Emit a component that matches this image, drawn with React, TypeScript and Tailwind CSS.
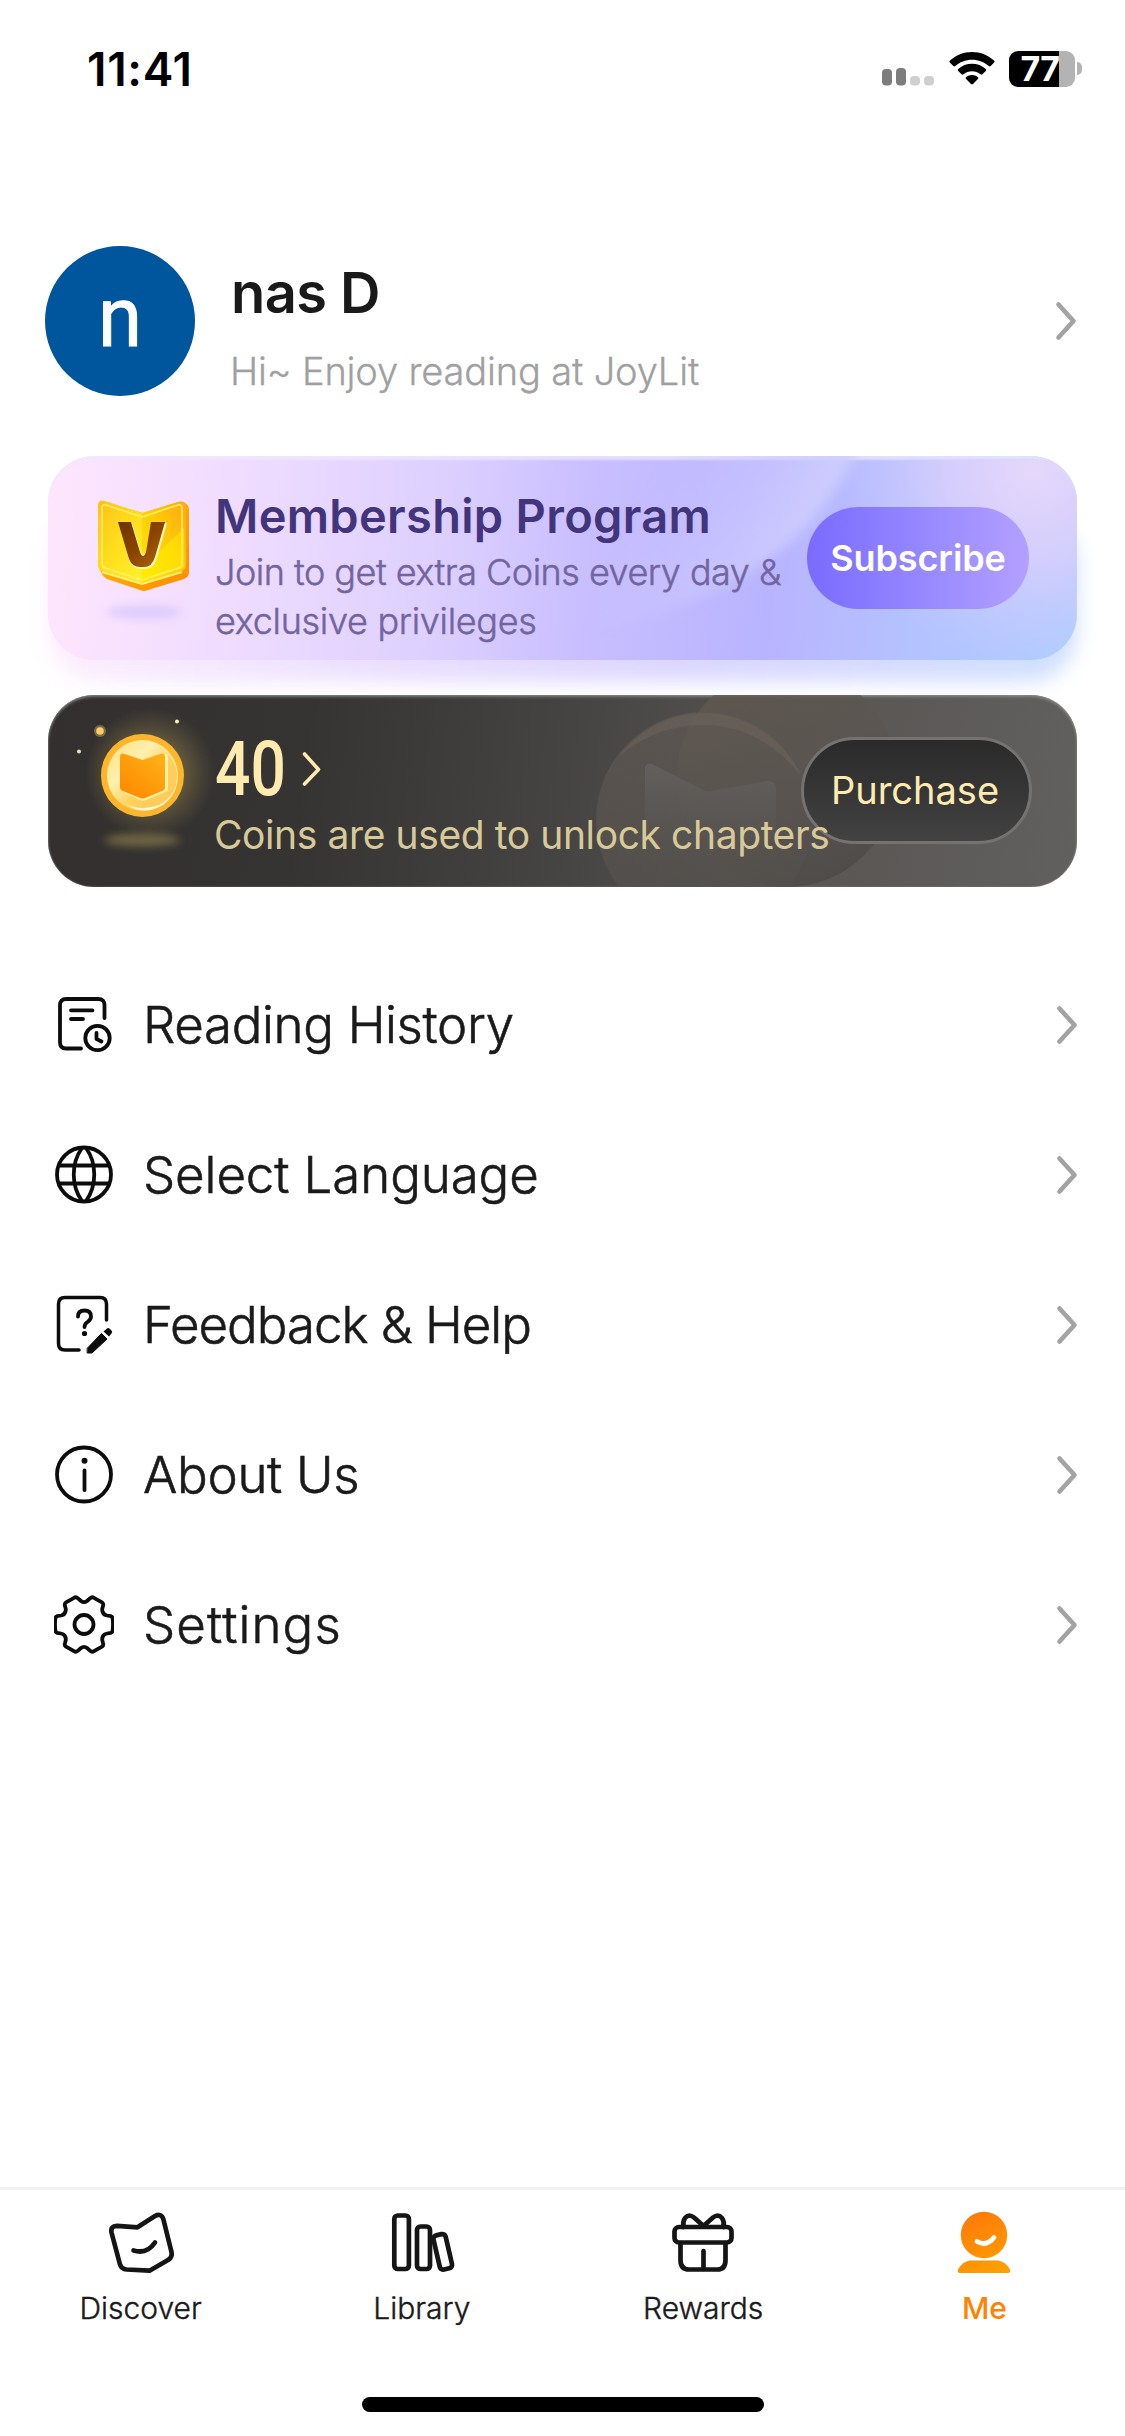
import type { ReactNode } from "react";

function Chevron() {
  return (
    <svg width="24" height="40" viewBox="0 0 24 40" fill="none" stroke="#a3a3a3" strokeWidth="4.600" strokeLinecap="round" strokeLinejoin="round">
      <path d="M4.500 3.500L19.500 20L4.500 36.500" />
    </svg>
  );
}

function StatusBar() {
  return (
    <div className="flex h-[137px] items-start justify-between pr-[43px] pl-[87px]">
      <span className="mt-[41px] font-['Inter'] text-[46px] leading-[56px] font-semibold tracking-[0.7px] text-black">
        11:41
      </span>
      <div className="mt-[51px] flex h-9 items-start">
        <svg width="53" height="36" viewBox="0 0 53 36" className="mr-[14px]">
          <rect x="0" y="18" width="10" height="16.500" rx="4" fill="#7d7d7d" />
          <rect x="14" y="17" width="10" height="17.500" rx="4" fill="#7d7d7d" />
          <rect x="28" y="25" width="10" height="9.500" rx="4" fill="#cfcfcf" />
          <rect x="42" y="25" width="10" height="9.500" rx="4" fill="#cfcfcf" />
        </svg>
        <svg width="46" height="36" viewBox="0 0 46 36" className="mr-[14px]">
          <path d="M23 1C14.500 1 6.800 4.200 1 9.600C.3 10.200.3 11 .9 11.600L4.300 15C4.800 15.600 5.600 15.600 6.200 15.100C10.700 11 16.500 8.700 23 8.700C29.500 8.700 35.300 11 39.800 15.100C40.400 15.600 41.200 15.600 41.700 15L45.100 11.600C45.700 11 45.700 10.200 45 9.600C39.200 4.200 31.500 1 23 1Z" />
          <path d="M23 12.700C17.800 12.700 13 14.600 9.300 17.900C8.600 18.500 8.600 19.300 9.200 19.900L12.600 23.300C13.200 23.900 13.900 23.800 14.500 23.300C16.900 21.400 19.800 20.300 23 20.300C26.200 20.300 29.100 21.400 31.500 23.300C32.100 23.800 32.800 23.900 33.400 23.300L36.800 19.900C37.400 19.300 37.400 18.500 36.700 17.900C33 14.600 28.200 12.700 23 12.700Z" />
          <path d="M23 24.100C20.700 24.100 18.700 24.900 17.200 26.100C16.500 26.700 16.500 27.400 17.100 28L22 33C22.600 33.600 23.400 33.600 24 33L28.900 28C29.500 27.400 29.500 26.700 28.800 26.100C27.300 24.900 25.300 24.100 23 24.100Z" />
        </svg>
        <div className="flex h-9 w-[66px] items-center justify-center rounded-[9px] bg-[linear-gradient(90deg,#000_50px,#b3b3b3_50px)] pr-[4px] font-['Inter'] text-[34px] leading-9 font-bold tracking-[-0.5px] text-white">
          77
        </div>
        <div className="mt-[11px] ml-[2px] h-[13px] w-[5px] rounded-r-full bg-[#b3b3b3]" />
      </div>
    </div>
  );
}

function Profile() {
  return (
    <div className="mt-[109px] flex h-[150px] items-center pr-[47px] pl-[45px]">
      <div className="flex size-[150px] items-center justify-center rounded-full bg-[#00569c] pb-[7px] font-['Roboto'] text-[83px] leading-none text-white">
        <span className="scale-x-[0.96] [-webkit-text-stroke:1px_white]">n</span>
      </div>
      <div className="ml-[36px] flex-1">
        <h1 className="mt-[11px] font-['Inter'] text-[56px] leading-[68px] font-semibold tracking-[-0.600px] text-[#1a1a1a]">nas D</h1>
        <p className="mt-[20px] -ml-px font-['Inter'] text-[38px] leading-[48px] font-light tracking-[-0.150px] whitespace-nowrap text-[#a0a0a0] [-webkit-text-stroke:0.3px_#a0a0a0]">
          Hi~ Enjoy reading at JoyLit
        </p>
      </div>
      <Chevron />
    </div>
  );
}

function MemberBadge() {
  return (
    <svg width="110" height="140" viewBox="0 0 110 140" fill="none" className="shrink-0">
      <defs>
        <linearGradient id="badge-side" x1="0" y1="0" x2="1" y2="1">
          <stop stopColor="#ffc400" />
          <stop offset="1" stopColor="#ff8b00" />
        </linearGradient>
        <linearGradient id="badge-left" x1="0" y1="0" x2="0.800" y2="1">
          <stop stopColor="#ffc01a" />
          <stop offset="0.500" stopColor="#ffdc1c" />
          <stop offset="1" stopColor="#ffee2a" />
        </linearGradient>
        <linearGradient id="badge-right" x1="1" y1="0" x2="0" y2="1">
          <stop stopColor="#ffaa10" />
          <stop offset="0.450" stopColor="#ffca0a" />
          <stop offset="1" stopColor="#ffec00" />
        </linearGradient>
        <linearGradient id="badge-v" x1="0" y1="0" x2="1" y2="1">
          <stop stopColor="#6a3500" />
          <stop offset="0.500" stopColor="#8a4300" />
          <stop offset="1" stopColor="#b06a12" />
        </linearGradient>
        <filter id="badge-blur" x="-30%" y="-100%" width="160%" height="300%">
          <feGaussianBlur stdDeviation="4" />
        </filter>
      </defs>
      <ellipse cx="54" cy="120" rx="38" ry="7" fill="#d3c5fa" opacity="0.700" filter="url(#badge-blur)" />
      <path d="M9 14Q9 8 15 10L53 21L88 10Q91 9 95 11Q99 13 99 18V80Q99 85 94 87L58 98Q54 100 50 98L17 87Q13 85 11 80L9 76Z" fill="url(#badge-side)" />
      <path d="M8 14Q8 7 15 9L52 21V91L12 79Q8 78 8 74Z" fill="url(#badge-left)" />
      <path d="M52 21L88 10Q96 8 96 15V73Q96 77 92 79L52 91Z" fill="url(#badge-right)" />
      <path d="M52 76L94 36V73Q94 76 91 77L52 89Z" fill="#fff000" opacity="0.500" />
      <path d="M12 16Q12 12 16 13L52 25L88 13Q92 12 92 16V72Q92 75 89 76L52 88L15 76Q12 75 12 72Z" stroke="#fff06a" strokeWidth="1.500" />
      <path d="M12 80L52 92L92 80" stroke="#fff27a" strokeWidth="2" />
      <path d="M30 31H42L51 60Q53 65 56 60L64 31H77L67 66Q64 77 55 77H51Q42 77 39 68Z" fill="#fff7b8" />
      <path d="M28 30H41L50 60Q53 68 56 60L61 30H75L65 65Q62 75 54 75H50Q42 75 39 67Z" fill="url(#badge-v)" />
    </svg>
  );
}

function MembershipCard() {
  return (
    <section className="relative mx-[48px] mt-[60px] h-[204px]">
      <div className="absolute inset-x-0 top-[60px] -bottom-[22px] rounded-[50px] bg-[linear-gradient(90deg,#fdeefe,#e9defe_35%,#dcd6ff_60%,#cfe0ff)] blur-[10px]" />
      <div className="relative flex h-full overflow-hidden rounded-[46px] bg-[linear-gradient(95deg,#ffe6fd_0%,#ecdaff_22%,#ddd0ff_38%,#c9bfff_52%,#b9b4ff_70%,#b4c2ff_84%,#b0ceff_100%)] shadow-[inset_0_4px_2px_rgba(240,232,255,0.75)]">
        <svg className="absolute inset-0" width="1029" height="204" viewBox="0 0 1029 204">
          <defs>
            <linearGradient id="ray" x1="610" y1="20" x2="745" y2="90" gradientUnits="userSpaceOnUse">
              <stop stopColor="#cbc6ff" stopOpacity="0" />
              <stop offset="1" stopColor="#cfcdff" stopOpacity="0.900" />
            </linearGradient>
            <radialGradient id="corner" cx="985" cy="15" r="195" gradientUnits="userSpaceOnUse">
              <stop stopColor="#e6d8fb" />
              <stop offset="0.450" stopColor="#dccffc" stopOpacity="0.800" />
              <stop offset="1" stopColor="#cfc6ff" stopOpacity="0" />
            </radialGradient>
            <filter id="soft" x="-20%" y="-20%" width="140%" height="140%">
              <feGaussianBlur stdDeviation="6" />
            </filter>
          </defs>
          <path d="M812 -10C784 50 750 80 728 97C690 128 640 150 560 170L480 -10Z" fill="url(#ray)" filter="url(#soft)" />
          <rect x="0" y="4" width="1029" height="200" fill="url(#corner)" />
        </svg>
        <div className="relative flex w-full items-start">
          <div className="mt-[36px] ml-[42px] w-[125px]">
            <MemberBadge />
          </div>
          <div className="w-[592px] shrink-0 whitespace-nowrap">
            <h2 className="mt-[32px] font-['Inter'] text-[47px] leading-[56px] font-semibold tracking-[0.300px] text-[#43357b]">
              Membership Program
            </h2>
            <p className="mt-[4px] font-['Inter'] text-[36px] leading-[49px] font-light tracking-[-0.500px] text-[#72659f] [-webkit-text-stroke:0.5px_#72659f]">
              Join to get extra Coins every day &amp;
              <br />
              <span className="tracking-[-0.300px]">exclusive privileges</span>
            </p>
          </div>
          <button className="mt-[51px] h-[102px] w-[222px] rounded-full bg-linear-to-r from-[#7a6bff] to-[#b3a0ff] font-['Inter'] text-[36px] font-semibold tracking-[-0.100px] text-white">
            Subscribe
          </button>
        </div>
      </div>
    </section>
  );
}

function CoinArt() {
  return (
    <svg width="167" height="192" viewBox="0 0 167 192" fill="none" className="shrink-0">
      <defs>
        <radialGradient id="halo">
          <stop offset="0.500" stopColor="#a08a4c" stopOpacity="0.450" />
          <stop offset="1" stopColor="#8a7a45" stopOpacity="0" />
        </radialGradient>
        <linearGradient id="face" x1="0" y1="0" x2="1" y2="1">
          <stop stopColor="#ffdf7a" />
          <stop offset="0.350" stopColor="#fff0b0" />
          <stop offset="0.600" stopColor="#ffd05a" />
          <stop offset="1" stopColor="#ffc95a" />
        </linearGradient>
        <linearGradient id="book" x1="1" y1="0" x2="0.200" y2="1">
          <stop stopColor="#ffb31a" />
          <stop offset="1" stopColor="#ff8a00" />
        </linearGradient>
        <filter id="coin-blur" x="-50%" y="-150%" width="200%" height="400%">
          <feGaussianBlur stdDeviation="4" />
        </filter>
      </defs>
      <circle cx="102" cy="78" r="65" fill="url(#halo)" />
      <ellipse cx="94" cy="145" rx="38" ry="6.500" fill="#7d7147" opacity="0.850" filter="url(#coin-blur)" />
      <circle cx="52" cy="36" r="6" fill="#ffd071" opacity="0.350" />
      <circle cx="52" cy="36" r="3.800" fill="#ffcd68" />
      <circle cx="129" cy="26.500" r="2" fill="#ffeeb8" />
      <circle cx="31" cy="56.500" r="2" fill="#e9e0b0" />
      <circle cx="94.500" cy="80.500" r="41.500" fill="#fdb62c" />
      <circle cx="94.500" cy="80.500" r="35.500" fill="url(#face)" />
      <path d="M111 50Q126 60 129 78Q130 100 111 110Q92 117 76 108Q95 122 115 110Q131 98 129.500 78Q128 60 111 50Z" fill="#fff6d2" />
      <path d="M75 63Q75 58 80 60L95 66L114 59Q120 57 120 63V93Q120 96 117 97L98 105Q95 106 92 105L77 98Z" fill="#fff0a8" />
      <path d="M72 62Q72 57 77 59L94.500 65L112 59Q117 57 117 62V92Q117 95 114 96L97 103Q94.500 104 92 103L75 96Q72 95 72 92Z" fill="url(#book)" />
    </svg>
  );
}

function CoinsCard() {
  return (
    <section className="relative mx-[48px] mt-[35px] flex h-[192px] overflow-hidden rounded-[46px] bg-[linear-gradient(97deg,#322f2e_0%,#363433_25%,#464442_50%,#585553_72%,#62605e_100%)] shadow-[inset_0_2px_3px_rgba(150,155,150,0.65),inset_0_0_2px_rgba(140,140,140,0.8)]">
      <svg className="absolute inset-0" width="1029" height="192" viewBox="0 0 1029 192">
        <defs>
          <linearGradient id="disc-back" x1="0.200" y1="0" x2="0.700" y2="1">
            <stop stopColor="#625950" stopOpacity="0.850" />
            <stop offset="0.500" stopColor="#5c554f" stopOpacity="0.600" />
            <stop offset="1" stopColor="#464442" stopOpacity="0.600" />
          </linearGradient>
          <linearGradient id="disc-front" x1="0.300" y1="0" x2="0.500" y2="1">
            <stop stopColor="#605953" stopOpacity="0.700" />
            <stop offset="1" stopColor="#524e4b" stopOpacity="0.750" />
          </linearGradient>
          <linearGradient id="disc-book" x1="0" y1="0" x2="0" y2="1">
            <stop stopColor="#636160" stopOpacity="0.900" />
            <stop offset="1" stopColor="#585552" stopOpacity="0" />
          </linearGradient>
        </defs>
        <circle cx="739" cy="82" r="110" fill="url(#disc-back)" />
        <circle cx="656" cy="125" r="108" fill="url(#disc-front)" />
        <path d="M570 62C590 36 620 18 656 18C700 18 738 46 754 82C730 52 698 30 656 30C622 30 594 42 570 62Z" fill="#6e645b" opacity="0.500" />
        <path d="M597 72Q599 66 606 70L655 95Q662 98 668 95L720 86Q728 86 728 94V170H597Z" fill="url(#disc-book)" />
      </svg>
      <CoinArt />
      <div className="relative z-10 w-[586px] shrink-0 whitespace-nowrap text-[#ffeab0]">
        <div className="flex h-[94px] items-start">
          <span className="mt-[30px] w-[87px] origin-left scale-x-[0.82] font-['Roboto'] text-[76px] leading-[88px] font-medium">
            40
          </span>
          <svg width="20" height="36" viewBox="0 0 20 36" fill="none" stroke="#ffeab0" strokeWidth="3.600" strokeLinecap="round" strokeLinejoin="round" className="mt-[56px]">
            <path d="M2.500 3L16.500 18.500L2.500 33" />
          </svg>
        </div>
        <p className="mt-[21px] -ml-px font-['Inter'] text-[39px] leading-[50px] tracking-[-0.400px] text-[#d8ca98]">
          Coins are used to unlock chapters
        </p>
      </div>
      <button className="relative mt-[42px] h-[107px] w-[231px] shrink-0 rounded-full border-[3.5px] border-[#747372] bg-linear-to-b from-[#2a2a2a] to-[#424242] pr-[3px] font-['Inter'] text-[38px] text-[#ffebb2]">
        Purchase
      </button>
    </section>
  );
}

function MenuIcon({ children }: { children: ReactNode }) {
  return (
    <svg width="60" height="60" viewBox="0 0 60 60" fill="none" stroke="#0c0c0c" strokeWidth="3.800" strokeLinecap="round" strokeLinejoin="round">
      {children}
    </svg>
  );
}

const menu = [
  {
    label: "Reading History",
    className: "tracking-[-0.350px]",
    icon: (
      <>
        <path d="M50.500 23V10Q50.500 4 44.500 4H12Q6 4 6 10V47.500Q6 53.500 12 53.500H27" />
        <path d="M17 15.300H38.500M17 24H29" />
        <circle cx="43.500" cy="43" r="12.200" />
        <path d="M42.500 38V44L47.500 46.500" />
      </>
    ),
  },
  {
    label: "Select Language",
    className: "tracking-[-0.100px]",
    icon: (
      <>
        <circle cx="30" cy="29.500" r="27" />
        <path d="M5 20.500H55M5 38.500H55" />
        <path d="M28 3C17 18 17 41 28 56M32 3C43 18 43 41 32 56" />
      </>
    ),
  },
  {
    label: "Feedback & Help",
    className: "tracking-[-1px]",
    icon: (
      <>
        <path d="M52.500 25V9Q52.500 2.500 46 2.500H11Q4.500 2.500 4.500 9V48.500Q4.500 55 11 55H25" strokeWidth="3.500" />
        <path d="M24 21.500Q24 15.500 30.500 15.500Q37 15.500 37 21.500Q37 24.500 33.500 27Q30.500 29 30.500 32" />
        <circle cx="30.500" cy="38.500" r="2.600" fill="#0c0c0c" stroke="none" />
        <path d="M33.500 53L47.500 38.500L53 44L38 58H33.500Z" fill="#0c0c0c" strokeWidth="1" />
        <path d="M49.500 36.500L53 33.500Q54.500 32.500 56 34L57.500 35.500Q59 37 57.500 38.500L55 41.500Z" fill="#0c0c0c" stroke="none" />
      </>
    ),
  },
  {
    label: "About Us",
    className: "tracking-[-0.300px]",
    icon: (
      <>
        <circle cx="30" cy="29.500" r="27" />
        <circle cx="30.500" cy="15.700" r="3" fill="#0c0c0c" stroke="none" />
        <path d="M30.500 25.500V45" />
      </>
    ),
  },
  {
    label: "Settings",
    className: "tracking-[1.100px]",
    icon: (
      <>
        <path d="M20 2.800Q22 1.500 24 3.300L27 6Q30 8.300 33 6L36 3.300Q38 1.500 40 2.800L48 7.300Q49.800 8.500 49 11L48.200 14Q48 19.500 53 20.500L57 21.200Q58.500 21.800 58.700 24Q59.300 29.500 58.700 35Q58.500 37.200 57 37.800L53 38.500Q48 39.500 48.200 45L49 48Q49.800 50.500 48 51.700L40 56.200Q38 57.500 36 55.700L33 53Q30 50.700 27 53L24 55.700Q22 57.500 20 56.200L12 51.700Q10.200 50.500 11 48L11.800 45Q12 39.500 7 38.500L3 37.800Q1.500 37.200 1.300 35Q.7 29.500 1.300 24Q1.500 21.800 3 21.200L7 20.500Q12 19.500 11.800 14L11 11Q10.200 8.500 12 7.300Z" />
        <circle cx="30" cy="29.500" r="9.500" />
      </>
    ),
  },
];

function Menu() {
  return (
    <ul className="mt-[63px]">
      {menu.map((item) => (
        <li key={item.label} className="flex h-[150px] items-center pr-[46px] pl-[54px]">
          <MenuIcon>{item.icon}</MenuIcon>
          <span className={`ml-[29px] flex-1 font-['Inter'] text-[51px] leading-[64px] font-light text-[#1a1a1a] [-webkit-text-stroke:0.6px_#1a1a1a] ${item.className}`}>
            {item.label}
          </span>
          <Chevron />
        </li>
      ))}
    </ul>
  );
}

function TabItem({ label, active, children }: { label: string; active?: boolean; children: ReactNode }) {
  return (
    <a className="flex flex-1 flex-col items-center pt-[17px]">
      <svg width="72" height="72" viewBox="0 0 72 72" fill="none" stroke="#151515" strokeWidth="4.700" strokeLinecap="round" strokeLinejoin="round">
        {children}
      </svg>
      <span className={`mt-[9px] font-['Inter'] text-[30px] leading-[40px] ${active ? "font-medium text-[#ff8205]" : "font-light text-[#1a1a1a] [-webkit-text-stroke:0.4px_#1a1a1a]"}`}>
        {label}
      </span>
    </a>
  );
}

function TabBar() {
  return (
    <nav className="flex h-[249px] flex-col border-t-[3px] border-[#f1f1f1]">
      <div className="flex">
        <TabItem label="Discover">
          <path d="M12 18.800L32.500 20.300L50 9Q56 5.800 58.300 12L66.500 45Q67.500 50 63.500 52.800L44.500 63.700L21.500 62.500Q16.500 62 15 57.500L6.500 25.500Q5.300 19 12 18.800Z" />
          <path d="M28.500 43.500Q42 47.500 50 35.500" />
        </TabItem>
        <TabItem label="Library">
          <rect x="8.300" y="8.500" width="14.600" height="53.500" rx="3.500" />
          <rect x="31" y="19.500" width="13" height="42.500" rx="3.500" />
          <rect x="50.500" y="27.500" width="12.500" height="35" rx="3.500" transform="rotate(-13 56 45)" />
        </TabItem>
        <TabItem label="Rewards">
          <rect x="7.500" y="20" width="57" height="15.500" rx="4.500" />
          <path d="M13.500 36V53Q13.500 62.500 22 62.500H50.500Q58.500 62.500 58.500 53V36" />
          <path d="M36.500 44V62" />
          <path d="M36.500 19L27 10.500Q22 6.500 18 11Q15.500 14.500 16.500 20M36.500 19L46 10.500Q51 6.500 55 11Q57.500 14.500 56.500 20" />
        </TabItem>
        <TabItem label="Me" active>
          <defs>
            <linearGradient id="me" x1="20" y1="5" x2="52" y2="67" gradientUnits="userSpaceOnUse">
              <stop stopColor="#ff780a" />
              <stop offset="1" stopColor="#ffa100" />
            </linearGradient>
          </defs>
          <circle cx="36" cy="28" r="23.200" fill="url(#me)" stroke="none" />
          <path d="M22 53.500H50Q57.500 54.500 62 62.500Q63 66 60 66H12Q9 66 10 62.500Q14.500 54.500 22 53.500Z" fill="url(#me)" stroke="none" />
          <path d="M29 34.500Q38.500 40 46 30.500" stroke="white" />
        </TabItem>
      </div>
      <div className="mt-auto mb-[24px] h-[15px] w-[402px] self-center rounded-full bg-black" />
    </nav>
  );
}

export default function App() {
  return (
    <div className="flex h-[2436px] w-[1125px] flex-col overflow-hidden bg-white font-['Inter',sans-serif]">
      <StatusBar />
      <Profile />
      <MembershipCard />
      <CoinsCard />
      <Menu />
      <div className="flex-1" />
      <TabBar />
    </div>
  );
}
